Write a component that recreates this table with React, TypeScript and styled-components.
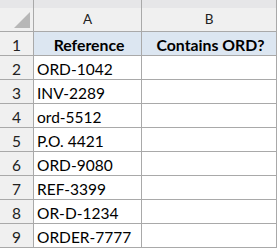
import React from 'react';
import styled, { createGlobalStyle } from 'styled-components';

const rows = ['ORD-1042', 'INV-2289', 'ord-5512', 'P.O. 4421', 'ORD-9080', 'REF-3399', 'OR-D-1234', 'ORDER-7777'];

const GlobalStyle = createGlobalStyle`
    html, body {
        margin: 0;
        padding: 0;
        background: #ffffff;
    }
`;

const Sheet = styled.div`
    display: grid;
    grid-template-columns: 33px 107px 134px;
    grid-template-rows: 31px repeat(9, 23px);
    gap: 1px;
    width: max-content;
    padding: 0 1px 1px 0;
    background: #a9a9a9;
    font-family: Lato, 'Liberation Sans', sans-serif;
`;

const Corner = styled.div`
    position: relative;
    background: linear-gradient(#e6e6e8 0 8px, #f0f0f0 8px);

    &::after {
        content: '';
        position: absolute;
        right: 3px;
        bottom: 3px;
        width: 0;
        height: 0;
        border-left: 16px solid transparent;
        border-bottom: 16px solid #b7b7b7;
    }
`;

const ColHead = styled.div`
    display: flex;
    align-items: flex-end;
    justify-content: center;
    padding-bottom: 4px;
    box-sizing: border-box;
    background: linear-gradient(#e6e6e8 0 8px, #f0f0f0 8px);
    color: #222;
    font-size: 13.5px;
`;

const RowHead = styled.div`
    display: flex;
    align-items: center;
    justify-content: center;
    padding-top: 2px;
    background: #f0f0f0;
    color: #222;
    font-size: 15.5px;
`;

const Cell = styled.div<{ $header?: boolean }>`
    display: flex;
    align-items: center;
    justify-content: ${p => (p.$header ? 'center' : 'flex-start')};
    padding: 2px 0 0 3px;
    background: ${p => (p.$header ? '#dce6f1' : '#ffffff')};
    color: #000;
    font-size: ${p => (p.$header ? '15.8px' : '15.5px')};
    font-weight: ${p => (p.$header ? 700 : 400)};
    white-space: nowrap;
`;

export default function App() {
    return (
        <>
            <GlobalStyle />
            <Sheet>
                <Corner />
                <ColHead>A</ColHead>
                <ColHead>B</ColHead>

                <RowHead>1</RowHead>
                <Cell $header>Reference</Cell>
                <Cell $header>Contains ORD?</Cell>

                {rows.map((value, i) => (
                    <React.Fragment key={value}>
                        <RowHead>{i + 2}</RowHead>
                        <Cell>{value}</Cell>
                        <Cell />
                    </React.Fragment>
                ))}
            </Sheet>
        </>
    );
}
